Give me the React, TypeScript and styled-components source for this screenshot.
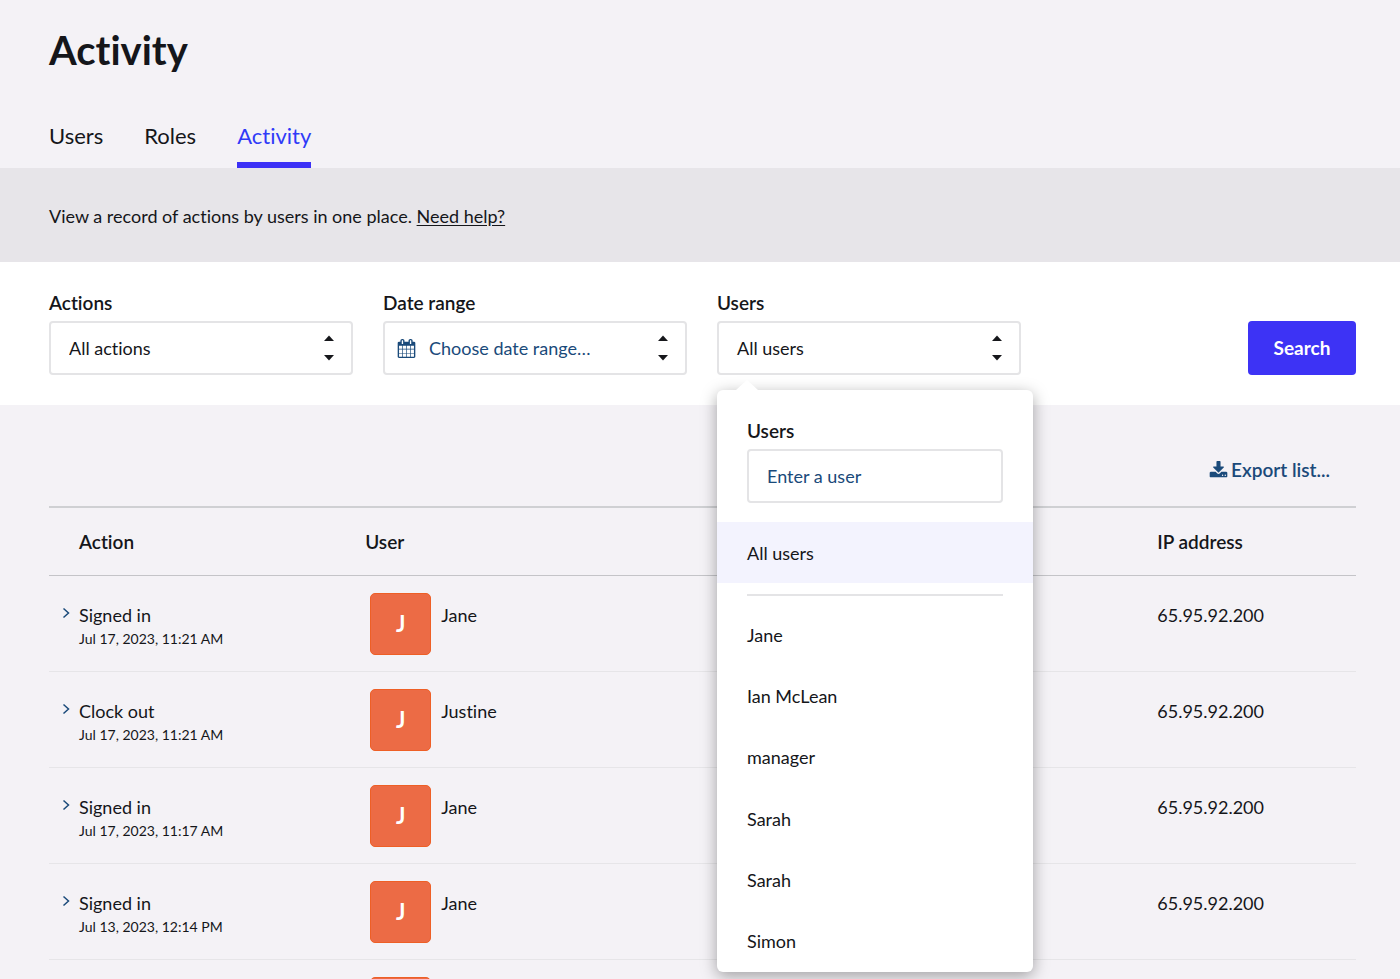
import React, { useState } from "react";
import styled, { createGlobalStyle } from "styled-components";

const colors = {
  ink: "#15161a",
  navy: "#1a4a7a",
  blue: "#3d33f5",
  page: "#f4f2f6",
  band: "#e7e5e9",
  line: "#cfd0d3",
  field: "#e4e4e6",
};

const GlobalStyle = createGlobalStyle`
  *, *::before, *::after { box-sizing: border-box; }
  body {
    margin: 0;
    background: ${colors.page};
    color: ${colors.ink};
    font-family: Lato, "Liberation Sans", sans-serif;
    font-size: 18px;
    line-height: 24px;
    font-variant-ligatures: no-common-ligatures;
    -webkit-font-smoothing: antialiased;
  }
  button, input, select {
    font: inherit;
    font-variant-ligatures: inherit;
    color: inherit;
  }
`;

const Page = styled.div`
  min-height: 100vh;
`;

const Header = styled.header`
  padding: 23px 44px 0 49px;
`;

const Title = styled.h1`
  margin: 0;
  font-size: 40px;
  line-height: 54px;
  font-weight: 700;
`;

const Tabs = styled.nav`
  display: flex;
  gap: 41px;
  margin-top: 41px;
`;

const Tab = styled.a<{ $active?: boolean }>`
  padding: 2px 0 10px;
  font-size: 22px;
  line-height: 32px;
  text-decoration: none;
  color: ${(p) => (p.$active ? "#2f3af8" : colors.ink)};
  border-bottom: 6px solid ${(p) => (p.$active ? "#3c30f6" : "transparent")};
`;

const Intro = styled.p`
  margin: 0;
  padding: 36px 44px 34px 49px;
  background: ${colors.band};
`;

const HelpLink = styled.a`
  color: inherit;
  text-underline-offset: 2px;
`;

const Filters = styled.form`
  display: flex;
  align-items: flex-end;
  gap: 30px;
  padding: 29px 44px 30px 49px;
  background: #fff;
`;

const Field = styled.div`
  position: relative;
  flex: 0 1 304px;
  display: flex;
  flex-direction: column;
  gap: 6px;
`;

const Label = styled.label`
  font-size: 19px;
  font-weight: 600;
`;

const Control = styled.div`
  position: relative;
`;

const SelectBox = styled.select`
  appearance: none;
  width: 100%;
  height: 54px;
  padding: 0 18px;
  border: 2px solid ${colors.field};
  border-radius: 4px;
  background: #fff;
`;

const PickerButton = styled.button<{ $placeholder?: boolean }>`
  display: flex;
  align-items: center;
  gap: 13px;
  width: 100%;
  height: 54px;
  padding: 0 ${(p) => (p.$placeholder ? "12px" : "18px")};
  border: 2px solid ${colors.field};
  border-radius: 4px;
  background: #fff;
  color: ${(p) => (p.$placeholder ? colors.navy : colors.ink)};
  text-align: left;
`;

const Arrows = styled.svg`
  position: absolute;
  right: 19px;
  top: 14px;
  pointer-events: none;
`;

const SearchButton = styled.button`
  margin-left: auto;
  width: 108px;
  height: 54px;
  border: 0;
  border-radius: 4px;
  background: ${colors.blue};
  color: #fff;
  font-size: 19px;
  font-weight: 700;
`;

const Popover = styled.div`
  position: absolute;
  z-index: 2;
  top: 99px;
  left: 0;
  width: 316px;
  border-radius: 6px;
  background: #fff;
  box-shadow: 0 4px 16px rgba(0, 0, 0, 0.35);

  &::before {
    content: "";
    position: absolute;
    top: -10px;
    left: 19px;
    border: 11px solid transparent;
    border-top: 0;
    border-bottom: 10px solid #fff;
  }
`;

const PopoverSearch = styled.div`
  display: flex;
  flex-direction: column;
  gap: 6px;
  padding: 29px 30px 19px;
`;

const TextBox = styled.input`
  width: 100%;
  height: 54px;
  padding: 0 18px;
  border: 2px solid ${colors.field};
  border-radius: 4px;
  background: #fff;

  &::placeholder {
    color: ${colors.navy};
    opacity: 1;
  }
`;

const Option = styled.button<{ $selected?: boolean }>`
  display: flex;
  align-items: center;
  width: 100%;
  height: 100%;
  min-height: 61px;
  padding: 0 30px;
  border: 0;
  background: ${(p) => (p.$selected ? "#f3f3fe" : "transparent")};
  text-align: left;
`;

const Divider = styled.hr`
  margin: 11px 30px 8px;
  border: 0;
  border-top: 2px solid ${colors.field};
`;

const Options = styled.ul`
  display: grid;
  grid-auto-rows: 1fr;
  min-height: 368px;
  margin: 0;
  padding: 0;
  list-style: none;
`;

const Main = styled.main`
  padding: 53px 44px 0 49px;
`;

const ExportLink = styled.a`
  display: flex;
  align-items: center;
  justify-content: flex-end;
  gap: 3px;
  padding: 0 26px 24px 0;
  color: ${colors.navy};
  font-size: 19px;
  font-weight: 600;
  text-decoration: none;
`;

const Table = styled.table`
  width: 100%;
  table-layout: fixed;
  border-collapse: separate;
  border-spacing: 0;
  border-top: 2px solid ${colors.line};
`;

const HeadCell = styled.th<{ $width: string }>`
  width: ${(p) => p.$width};
  height: 68px;
  padding: 0 30px;
  border-bottom: 1px solid #c4c4c8;
  font-size: 19px;
  font-weight: 600;
  text-align: left;
`;

const Cell = styled.td`
  height: 96px;
  padding: 17px 0 0 30px;
  border-bottom: 1px solid #e6e5e8;
  vertical-align: top;
`;

const ActionLine = styled.div`
  display: flex;
  align-items: center;
  margin: 10px 0 0 -18px;
`;

const ExpandButton = styled.button`
  display: flex;
  width: 18px;
  padding: 0 0 4px;
  border: 0;
  background: none;
  color: ${colors.navy};
`;

const Time = styled.time`
  display: block;
  font-size: 14px;
`;

const Person = styled.div`
  display: flex;
  gap: 10px;
  padding-left: 5px;
`;

const Avatar = styled.span`
  display: flex;
  align-items: center;
  justify-content: center;
  width: 61px;
  height: 62px;
  border: 1px solid #ee5f26;
  border-radius: 5px;
  background: #ec6b45;
  color: #fff;
  font-size: 22px;
  font-weight: 700;
`;

const CellText = styled.div`
  padding-top: 10px;
`;

function UpDown() {
  return (
    <Arrows width="10" height="26" viewBox="0 0 10 26" fill="#16171b" aria-hidden="true">
      <path d="M0 6 5 .5l5 5.500z" />
      <path d="M0 20h10l-5 5.500z" />
    </Arrows>
  );
}

function CalendarIcon() {
  return (
    <svg width="19" height="19" viewBox="0 0 1792 1792" fill="currentColor" aria-hidden="true">
      <path d="M192 1664h288v-288h-288v288zm352 0h320v-288h-320v288zm-352-352h288v-320h-288v320zm352 0h320v-320h-320v320zm-352-384h288v-288h-288v288zm736 736h320v-288h-320v288zm-384-736h320v-288h-320v288zm768 736h288v-288h-288v288zm-384-352h320v-320h-320v320zm-352-864v-288q0-13-9.500-22.500t-22.500-9.500h-64q-13 0-22.500 9.500t-9.500 22.500v288q0 13 9.500 22.500t22.500 9.500h64q13 0 22.500-9.500t9.500-22.500zm736 864h288v-320h-288v320zm-384-384h320v-288h-320v288zm384 0h288v-288h-288v288zm32-480v-288q0-13-9.500-22.500t-22.500-9.500h-64q-13 0-22.500 9.500t-9.500 22.500v288q0 13 9.500 22.500t22.500 9.500h64q13 0 22.500-9.500t9.500-22.500zm384-64v1280q0 52-38 90t-90 38h-1408q-52 0-90-38t-38-90v-1280q0-52 38-90t90-38h128v-96q0-66 47-113t113-47h64q66 0 113 47t47 113v96h384v-96q0-66 47-113t113-47h64q66 0 113 47t47 113v96h128q52 0 90 38t38 90z" />
    </svg>
  );
}

function DownloadIcon() {
  return (
    <svg width="19" height="19" viewBox="0 0 1792 1792" fill="currentColor" aria-hidden="true">
      <path d="M1344 1344q0-26-19-45t-45-19-45 19-19 45 19 45 45 19 45-19 19-45zm256 0q0-26-19-45t-45-19-45 19-19 45 19 45 45 19 45-19 19-45zm128-224v320q0 40-28 68t-68 28h-1472q-40 0-68-28t-28-68v-320q0-40 28-68t68-28h465l135 136q58 56 136 56t136-56l136-136h464q40 0 68 28t28 68zm-325-569q17 41-14 70l-448 448q-18 19-45 19t-45-19l-448-448q-31-29-14-70 17-39 59-39h256v-448q0-26 19-45t45-19h256q26 0 45 19t19 45v448h256q42 0 59 39z" />
    </svg>
  );
}

function Chevron() {
  return (
    <svg width="10" height="12" viewBox="0 0 10 12" fill="none" stroke="currentColor" strokeWidth="1.500" aria-hidden="true">
      <path d="M2.500 1.500 7.500 6l-5 4.500" />
    </svg>
  );
}

const users = ["Jane", "Ian McLean", "manager", "Sarah", "Sarah", "Simon"];

const rows = [
  { action: "Signed in", time: "Jul 17, 2023, 11:21 AM", user: "Jane", ip: "65.95.92.200" },
  { action: "Clock out", time: "Jul 17, 2023, 11:21 AM", user: "Justine", ip: "65.95.92.200" },
  { action: "Signed in", time: "Jul 17, 2023, 11:17 AM", user: "Jane", ip: "65.95.92.200" },
  { action: "Signed in", time: "Jul 13, 2023, 12:14 PM", user: "Jane", ip: "65.95.92.200" },
  { action: "Signed in", time: "Jul 13, 2023, 12:10 PM", user: "Jane", ip: "65.95.92.200" },
];

export default function App() {
  const [open, setOpen] = useState(true);
  const [selected, setSelected] = useState(-1);

  return (
    <Page>
      <GlobalStyle />
      <Header>
        <Title>Activity</Title>
        <Tabs aria-label="Sections">
          <Tab href="#users">Users</Tab>
          <Tab href="#roles">Roles</Tab>
          <Tab href="#activity" $active aria-current="page">Activity</Tab>
        </Tabs>
      </Header>
      <Intro>
        View a record of actions by users in one place. <HelpLink href="#help">Need help?</HelpLink>
      </Intro>
      <Filters onSubmit={(e) => e.preventDefault()}>
        <Field>
          <Label htmlFor="actions">Actions</Label>
          <Control>
            <SelectBox id="actions">
              <option>All actions</option>
            </SelectBox>
            <UpDown />
          </Control>
        </Field>
        <Field>
          <Label htmlFor="dates">Date range</Label>
          <Control>
            <PickerButton id="dates" type="button" $placeholder>
              <CalendarIcon />
              Choose date range…
            </PickerButton>
            <UpDown />
          </Control>
        </Field>
        <Field>
          <Label htmlFor="users">Users</Label>
          <Control>
            <PickerButton id="users" type="button" aria-expanded={open} onClick={() => setOpen(!open)}>
              {selected < 0 ? "All users" : users[selected]}
            </PickerButton>
            <UpDown />
          </Control>
          {open && (
            <Popover>
              <PopoverSearch>
                <Label htmlFor="user-search">Users</Label>
                <TextBox id="user-search" type="text" placeholder="Enter a user" />
              </PopoverSearch>
              <Option type="button" $selected={selected < 0} onClick={() => setSelected(-1)}>
                All users
              </Option>
              <Divider />
              <Options>
                {users.map((name, i) => (
                  <li key={i}>
                    <Option type="button" $selected={selected === i} onClick={() => setSelected(i)}>
                      {name}
                    </Option>
                  </li>
                ))}
              </Options>
            </Popover>
          )}
        </Field>
        <SearchButton type="submit">Search</SearchButton>
      </Filters>
      <Main>
        <ExportLink href="#export">
          <DownloadIcon />
          Export list...
        </ExportLink>
        <Table>
          <thead>
            <tr>
              <HeadCell scope="col" $width="21.9%">Action</HeadCell>
              <HeadCell scope="col" $width="60.6%">User</HeadCell>
              <HeadCell scope="col" $width="17.5%">IP address</HeadCell>
            </tr>
          </thead>
          <tbody>
            {rows.map((row, i) => (
              <tr key={i}>
                <Cell>
                  <ActionLine>
                    <ExpandButton type="button" aria-label="Show details">
                      <Chevron />
                    </ExpandButton>
                    {row.action}
                  </ActionLine>
                  <Time>{row.time}</Time>
                </Cell>
                <Cell>
                  <Person>
                    <Avatar aria-hidden="true">J</Avatar>
                    <CellText>{row.user}</CellText>
                  </Person>
                </Cell>
                <Cell>
                  <CellText>{row.ip}</CellText>
                </Cell>
              </tr>
            ))}
          </tbody>
        </Table>
      </Main>
    </Page>
  );
}
